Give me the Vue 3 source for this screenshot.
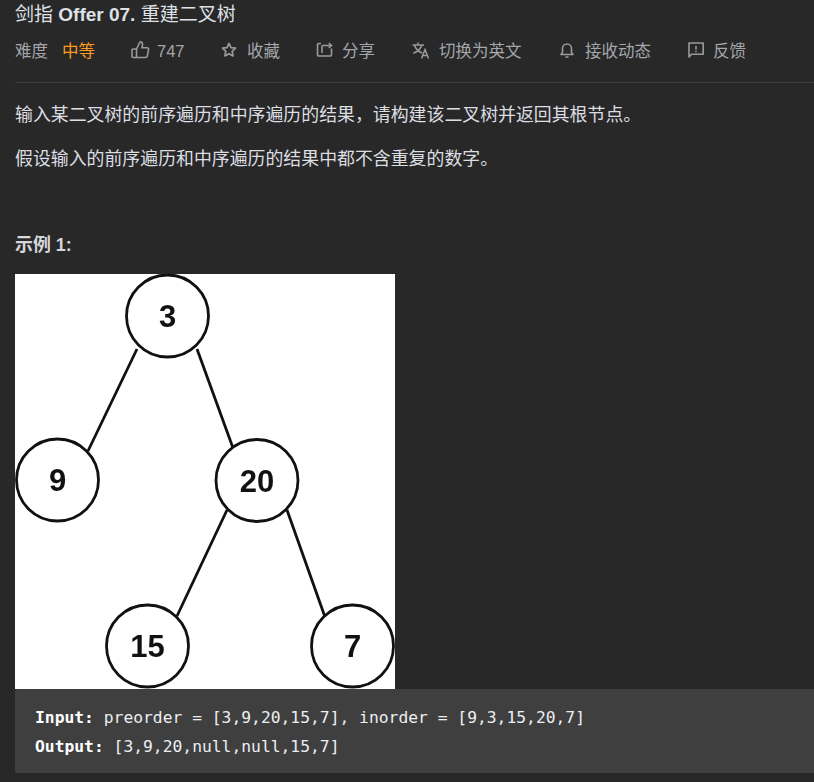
<script setup>
const nodes = [
  { x: 167.5, y: 316, t: '3' },
  { x: 57.5, y: 480, t: '9' },
  { x: 257, y: 480.500, t: '20' },
  { x: 147.5, y: 646, t: '15' },
  { x: 352.5, y: 646, t: '7' }
]
const edges = [
  [137, 349, 88, 451],
  [197, 349, 233, 448],
  [227, 510, 177, 616],
  [287, 510, 325, 617]
]
</script>

<template>
  <div class="page">
    <h1 class="title">剑指 <b>Offer 07.</b> 重建二叉树</h1>
    <div class="meta">
      <span class="label">难度</span>
      <span class="level">中等</span>
      <span class="item likes">
        <svg class="ic" width="19" height="18" viewBox="0 0 19 18" fill="none" stroke="#9a9a9a" stroke-width="1.600">
          <path d="M5.500 8v8.500H2a1 1 0 0 1-1-1V9a1 1 0 0 1 1-1h3.500l3.200-6.300c.3-.6 1-.9 1.600-.6 1 .4 1.400 1.400 1.200 2.400L11 6.800h5c1 0 1.800.9 1.600 1.900l-1.300 6.300c-.2.9-1 1.500-1.800 1.500H5.500" />
        </svg>
        <span class="num-text">747</span>
      </span>
      <span class="item fav">
        <svg class="ic" width="16" height="16" viewBox="0 0 16 16" fill="none" stroke="#9a9a9a" stroke-width="1.700" stroke-linejoin="round">
          <path d="M8 1.400l2 4.200 4.500.6-3.300 3.100.9 4.600L8 11.700l-4.100 2.200.9-4.600-3.300-3.100 4.500-.6z" />
        </svg>
        <span>收藏</span>
      </span>
      <span class="item share">
        <svg class="ic" width="17" height="16" viewBox="0 0 17 16" fill="none" stroke="#9a9a9a" stroke-width="1.600">
          <path d="M5 1.500H3A1.500 1.500 0 0 0 1.500 3v9.500A1.500 1.500 0 0 0 3 14h11a1.500 1.500 0 0 0 1.500-1.500V6.500" />
          <path d="M6 11V4.500c0-.6.400-1 1-1h8M12.800 1l2.700 2.500-2.700 2.500" />
        </svg>
        <span>分享</span>
      </span>
      <span class="item lang">
        <svg class="ic" width="18" height="17" viewBox="0 0 18 17" fill="none" stroke="#9a9a9a" stroke-width="1.500">
          <path d="M0.500 3h11.500M6 0.500V3M2.500 3c.8 3 4 6.500 7.500 8M9.800 3c-.8 3-3.800 6.500-8.500 8.200M9.500 16.500l3.500-9 3.500 9M10.700 13.500h4.600" />
        </svg>
        <span>切换为英文</span>
      </span>
      <span class="item bell">
        <svg class="ic" width="14" height="16" viewBox="0 0 14 16" fill="none" stroke="#9a9a9a" stroke-width="1.600">
          <path d="M1 12.500h12l-1.500-2V6.500a4.500 4.500 0 0 0-9 0v4z" stroke-linejoin="round" />
          <path d="M5.500 15h3" />
        </svg>
        <span>接收动态</span>
      </span>
      <span class="item feedback">
        <svg class="ic" width="16" height="16" viewBox="0 0 16 16" fill="none" stroke="#9a9a9a" stroke-width="1.600">
          <path d="M1 1h14.200v11.200H3.500L1 15z" stroke-linejoin="round" />
          <path d="M8 4v3.500M8 8.800v1.400" />
        </svg>
        <span>反馈</span>
      </span>
    </div>
    <div class="rule"></div>
    <p class="para first">输入某二叉树的前序遍历和中序遍历的结果，请构建该二叉树并返回其根节点。</p>
    <p class="para second">假设输入的前序遍历和中序遍历的结果中都不含重复的数字。</p>
    <p class="example">示例 1:</p>
    <svg class="tree" width="380" height="415" viewBox="15 274 380 415">
      <rect x="15" y="274" width="380" height="415" fill="#fff" />
      <g class="soft">
        <line v-for="(e, i) in edges" :key="i" :x1="e[0]" :y1="e[1]" :x2="e[2]" :y2="e[3]" stroke="#111" stroke-width="2.800" />
        <g v-for="n in nodes" :key="n.t">
          <circle :cx="n.x" :cy="n.y" r="41" fill="#fff" stroke="#111" stroke-width="2.800" />
          <text :x="n.x" :y="n.y + 11" text-anchor="middle" class="num">{{ n.t }}</text>
        </g>
      </g>
    </svg>
    <pre class="code"><strong>Input:</strong> preorder = [3,9,20,15,7], inorder = [9,3,15,20,7]
<strong>Output:</strong> [3,9,20,null,null,15,7]</pre>
  </div>
</template>

<style>
html, body { background: #282828; overflow: hidden; }
</style>

<style scoped>
.page {
  width: 814px;
  height: 782px;
  box-sizing: border-box;
  padding-left: 15px;
  overflow: hidden;
  background: #282828;
  font-family: "Liberation Sans", "Noto Sans CJK SC", sans-serif;
  color: #dcdee2;
}
.title {
  margin: 0;
  height: 28px;
  padding-top: 1px;
  box-sizing: content-box;
  line-height: 28px;
  font-size: 19px;
  font-weight: 400;
  color: #dfe1e6;
}
.title b { font-weight: 700; font-size: 19px; }
.meta {
  display: flex;
  align-items: center;
  height: 28px;
  margin-top: 7px;
  font-size: 16.500px;
  color: #a3a6ab;
}
.level { margin-left: 14px; color: #ff9a1f; }
.item { display: flex; align-items: center; }
.num-text { position: relative; top: 1px; }
.likes { margin-left: 36px; gap: 7px; }
.fav { margin-left: 36.500px; gap: 10px; }
.share { margin-left: 36px; gap: 9px; }
.lang { margin-left: 37px; gap: 9px; }
.bell { margin-left: 38.500px; gap: 11px; }
.feedback { margin-left: 37px; gap: 9px; }
.ic { display: block; flex: none; }
.rule {
  height: 1px;
  margin-top: 18px;
  background: #3d3d3d;
}
.para {
  margin: 0;
  height: 26px;
  line-height: 26px;
  font-size: 17.900px;
  color: #dcdee2;
}
.first { margin-top: 19px; }
.second { margin-top: 18px; }
.example {
  margin: 60px 0 0;
  height: 26px;
  line-height: 26px;
  font-size: 17.900px;
  font-weight: 700;
  color: #d5d7db;
}
.tree { display: block; margin-top: 16px; }
.soft { filter: blur(0.35px); }
.num {
  font-family: "Liberation Sans", sans-serif;
  font-size: 31px;
  font-weight: 700;
  fill: #111;
}
.code {
  margin: 0;
  box-sizing: border-box;
  height: 84px;
  padding: 14px 20px;
  border-radius: 3px 0 0 3px;
  background: #3f3f3f;
  font-family: "DejaVu Sans Mono", monospace;
  font-size: 16.320px;
  line-height: 29px;
  color: #eceef2;
}
.code strong { color: #fff; }
</style>
